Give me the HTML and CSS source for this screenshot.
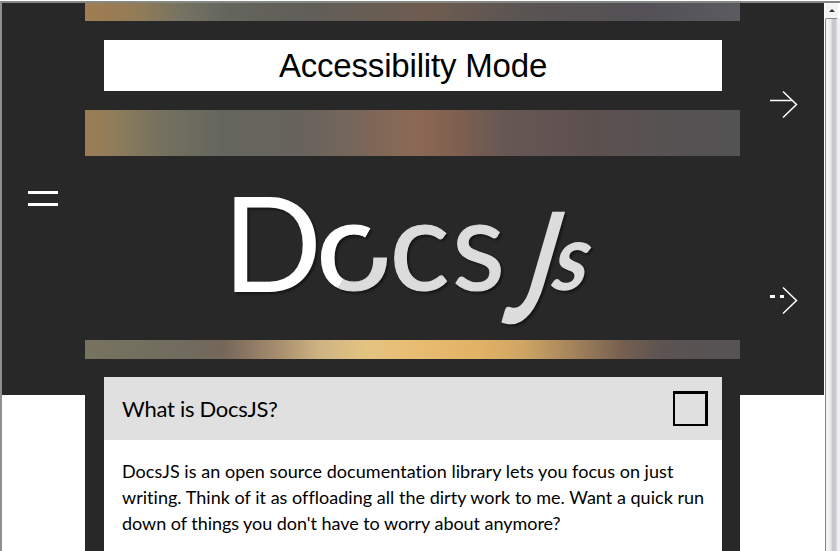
FILE: index.html
```
<!DOCTYPE html>
<html lang="en">
<head>
<meta charset="utf-8">
<title>DocsJS</title>
<link rel="stylesheet" href="styles.css">
</head>
<body>
<div class="window">
  <nav class="side menu" aria-label="Menu"><span></span><span></span></nav>
  <main class="page">
    <div class="band band-top"></div>
    <button class="mode" type="button"><span>Accessibility Mode</span></button>
    <div class="band band-middle"></div>
    <header class="logo">
      <svg width="655" height="184" viewBox="85 156 655 184">
        <defs>
          <linearGradient id="ring" gradientUnits="userSpaceOnUse" x1="335" y1="274" x2="351" y2="284">
            <stop offset=".5" stop-color="#fff"/><stop offset=".5" stop-color="#dcdcdc"/>
          </linearGradient>
          <mask id="gap" maskUnits="userSpaceOnUse" x="300" y="200" width="100" height="110">
            <rect x="300" y="200" width="100" height="110" fill="#fff"/>
            <path d="M354 257.5L374 222H400V257.5Z" fill="#000"/>
          </mask>
        </defs>
        <g class="letters">
          <text class="white" x="222.5" y="292">D</text>
          <g mask="url(#gap)"><text class="o" x="316" y="290" fill="url(#ring)" stroke="url(#ring)" textLength="76" lengthAdjust="spacingAndGlyphs">o</text></g>
          <text class="silver lower" x="389.5" y="290">c</text>
          <text class="silver lower" x="452" y="290" textLength="53" lengthAdjust="spacingAndGlyphs">s</text>
          <text class="silver script" transform="translate(503 323) skewX(-12) scale(.64 1)">J</text>
          <text class="silver script small" transform="translate(551 290) skewX(-8) scale(.95 1)">s</text>
        </g>
      </svg>
    </header>
    <div class="band band-bottom"></div>
    <section class="card">
      <h2><span>What is DocsJS?</span><i class="box"></i></h2>
      <p><span class="l1">DocsJS is an open source documentation library lets you focus on just</span><br><span class="l2">writing. Think of it as offloading all the dirty work to me. Want a quick run</span><br><span class="l3">down of things you don't have to worry about anymore?</span></p>
    </section>
  </main>
  <nav class="side arrows" aria-label="Sections">
    <svg width="29" height="29" viewBox="0 0 29 29"><path d="M0 10.5H23M13 1.5L26.5 14.5 13 27.5"/></svg>
    <svg width="29" height="29" viewBox="0 0 29 29"><path d="M13 1.5L26.5 14.5 13 27.5"/><path class="dash" d="M0 10.5H5M10 10.5H14"/></svg>
  </nav>
  <div class="scroll"><div class="up"></div><div class="thumb"></div></div>
</div>
</body>
</html>
```
FILE: styles.css
```
* { box-sizing: border-box; }
body { margin: 0; background: #fff; color: #000; overflow: hidden; }
.window {
  display: grid;
  grid-template-columns: 83px 655px 84px 16px;
  height: 550px;
  margin-top: 1px;
  border-top: 2px solid #858985;
  border-left: 2px solid #8e918f;
  overflow: hidden;
}
.side { height: 392px; background: #282828; }
.menu { padding: 188px 0 0 26px; }
.menu span { display: block; width: 30px; height: 3px; margin-bottom: 9px; background: #fff; }
.page { display: flex; flex-direction: column; background: #282828; overflow: hidden; }
.band { flex: none; }
.band-top { height: 18px; background: linear-gradient(90deg, #a17d50 0, #927c57 8%, #747263 15%, #63655d 22%, #605e58 34%, #6f5c50 52%, #5a5452 67%, #535156 85%, #5a5a61 100%); }
.mode {
  flex: none; height: 51px; margin: 19px 18px 19px 19px; padding: 0;
  border: 0; background: #fff; color: #000;
  font: 33px/51px "Liberation Sans", Arial, sans-serif; letter-spacing: -.18px; text-align: center;
}
.band-middle { height: 46px; background: linear-gradient(90deg, #9c7d55 0, #8d7c5b 5%, #73705e 12%, #64665e 21%, #67635c 33%, #79665a 42%, #8c6954 50%, #816150 56%, #665753 64%, #5c504f 78%, #575252 88%, #535254 100%); }
.logo { flex: none; height: 184px; }
.logo svg { display: block; overflow: visible; }
.letters { font: 131px Lato, sans-serif; filter: drop-shadow(2px 2px 1px rgba(0,0,0,.45)); }
.white { fill: #fff; }
.silver { fill: #dcdcdc; stroke: #dcdcdc; }
.lower, .o { font-size: 126px; stroke-width: 1.2; }
.script { font: italic bold 154px Lato, sans-serif; stroke-width: 0; }
.small { font-size: 92px; }
.band-bottom { height: 19px; background: linear-gradient(90deg, #77735f 0, #706b5e 16%, #756659 21%, #a38b6d 29%, #cfb483 36%, #e4c381 43%, #e8bd72 50%, #e2b266 60%, #cfa564 67%, #a1815b 75%, #755f50 82%, #5c5352 88%, #555255 100%); }
.card { flex: 1; margin: 18px 18px 0 19px; background: #fff; font-family: Lato, sans-serif; font-variant-ligatures: none; }
.card h2 { display: flex; align-items: center; justify-content: space-between; height: 63px; margin: 0; padding: 0 14px 0 18px; background: #e0e0e0; font-size: 22px; font-weight: 400; letter-spacing: -.27px; }
.box { width: 35px; height: 35px; border: solid #000; border-width: 3px 3px 2px 2px; }
.card p { margin: 18px 0 0 18px; font-size: 18px; line-height: 26px; white-space: nowrap; }
.l1 { letter-spacing: .045px; }
.l2 { letter-spacing: .025px; }
.l3 { letter-spacing: -.04px; }
.arrows { display: flex; flex-direction: column; gap: 167px; padding: 87px 0 0 30px; }
.arrows path { fill: none; stroke: #fff; stroke-width: 1.5; }
.arrows .dash { stroke-width: 3; }
.scroll { border-left: 1px solid #fff; background: #f0f0f2; }
.up { display: flex; justify-content: center; height: 15px; padding-top: 6px; background: #f4f4f4; border-right: 2px solid #fff; }
.up::before { content: ""; width: 0; height: 0; border: solid transparent; border-width: 0 3px 3px; border-bottom-color: #333; }
.thumb { width: 12px; height: 540px; border-top: 1px solid #888; border-left: 1px solid #86868a; background: linear-gradient(90deg, #f3f3f3 0 25%, #e5e5e6 45%, #c8c7cd 60% 78%, #d9d9df 100%); border-radius: 2px 0 0; }
```
